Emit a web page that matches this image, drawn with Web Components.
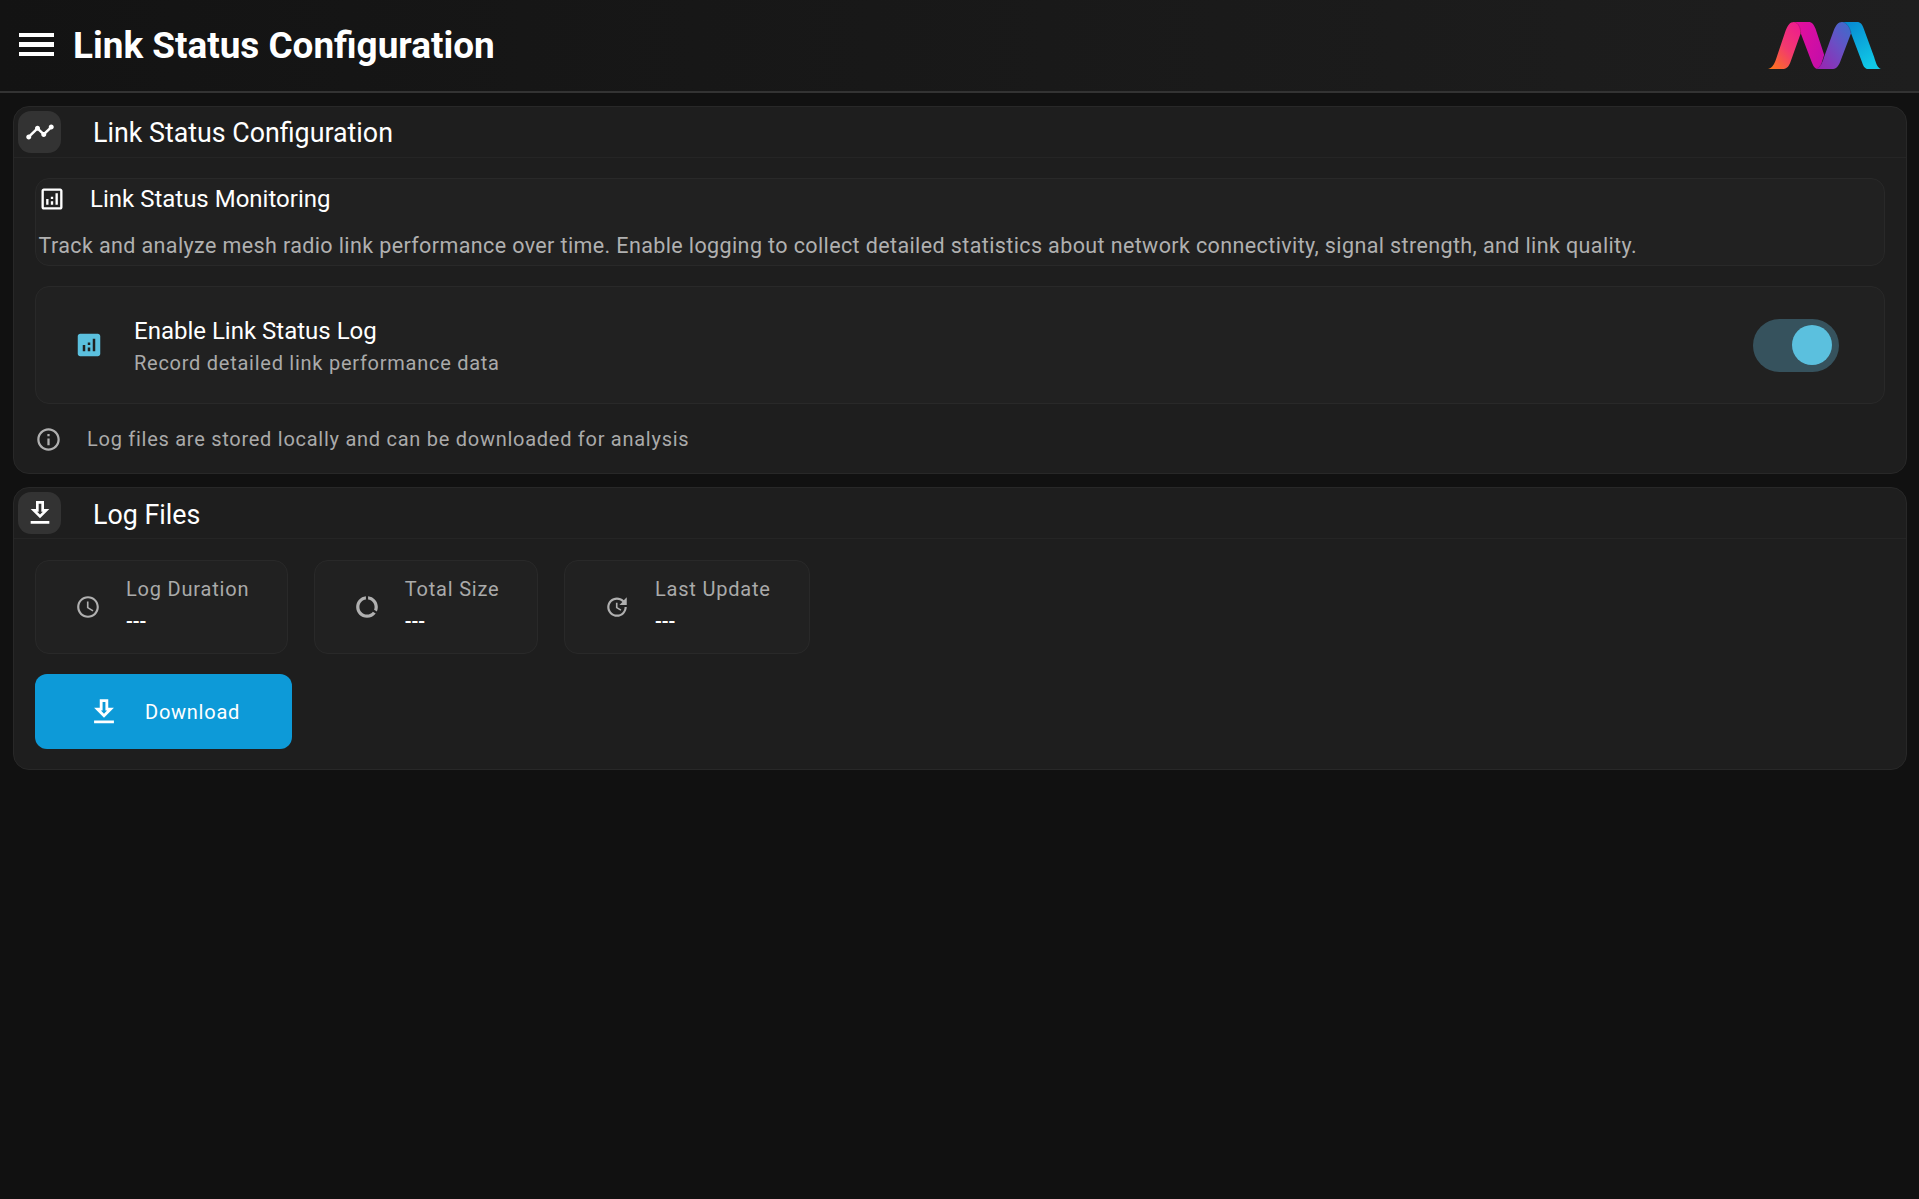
<!DOCTYPE html>
<html lang="en"><head><meta charset="utf-8"><title>Link Status Configuration</title>
<style>
html,body{margin:0;padding:0;background:#111;height:100%}
body{font-family:Roboto,"Liberation Sans",sans-serif;color:#fff}
</style></head><body>
<link-app></link-app>
<script>
const P={
 timeline:"M23 8c0 1.1-.9 2-2 2-.18 0-.35-.02-.51-.07l-3.56 3.55c.05.16.07.34.07.52 0 1.1-.9 2-2 2s-2-.9-2-2c0-.18.02-.36.07-.52l-2.55-2.55c-.16.05-.34.07-.52.07s-.36-.02-.52-.07l-4.55 4.56c.05.16.07.33.07.51 0 1.1-.9 2-2 2s-2-.9-2-2 .9-2 2-2c.18 0 .35.02.51.07l4.56-4.55C8.02 9.36 8 9.18 8 9c0-1.1.9-2 2-2s2 .9 2 2c0 .18-.02.36-.07.52l2.55 2.55c.16-.05.34-.07.52-.07s.36.02.52.07l3.55-3.56C19.02 8.35 19 8.18 19 8c0-1.1.9-2 2-2s2 .9 2 2z",
 assess:"M19 3H5c-1.1 0-2 .9-2 2v14c0 1.1.9 2 2 2h14c1.1 0 2-.9 2-2V5c0-1.1-.9-2-2-2zm0 16H5V5h14v14zM7 12h2v5H7zm8-5h2v10h-2zm-4 7h2v3h-2zm0-4h2v2h-2z",
 analytics:"M19 3H5c-1.1 0-2 .9-2 2v14c0 1.1.9 2 2 2h14c1.1 0 2-.9 2-2V5c0-1.1-.9-2-2-2zM9 17H7v-5h2v5zm4 0h-2v-3h2v3zm0-5h-2v-2h2v2zm4 5h-2V7h2v10z",
 info:"M11 7h2v2h-2zm0 4h2v6h-2zm1-9C6.48 2 2 6.48 2 12s4.48 10 10 10 10-4.48 10-10S17.52 2 12 2zm0 18c-4.41 0-8-3.59-8-8s3.59-8 8-8 8 3.59 8 8-3.59 8-8 8z",
 download:"M19 9h-4V3H9v6H5l7 7 7-7zm-8 2V5h2v6h1.17L12 13.17 9.83 11H11zm-6 7h14v2H5z",
 clock:"M11.99 2C6.47 2 2 6.48 2 12s4.47 10 9.99 10C17.52 22 22 17.52 22 12S17.52 2 11.99 2zM12 20c-4.42 0-8-3.58-8-8s3.58-8 8-8 8 3.58 8 8-3.58 8-8 8zm.5-13H11v6l5.25 3.15.75-1.23-4.5-2.67z",
 usage:"M13 2.05v3.03c3.39.49 6 3.39 6 6.92 0 .9-.18 1.75-.48 2.54l2.6 1.53c.56-1.24.88-2.62.88-4.07 0-5.18-3.95-9.45-9-9.95zM12 19c-3.87 0-7-3.13-7-7 0-3.53 2.61-6.43 6-6.92V2.05c-5.06.5-9 4.76-9 9.95 0 5.52 4.47 10 9.99 10 3.31 0 6.24-1.61 8.06-4.09l-2.6-1.53C16.17 17.98 14.21 19 12 19z",
 update:"M21 10.12h-6.78l2.74-2.82c-2.73-2.7-7.15-2.8-9.88-.1-2.73 2.71-2.73 7.08 0 9.79s7.15 2.71 9.88 0C18.32 15.65 19 14.08 19 12.1h2c0 1.98-.88 4.55-2.64 6.29-3.51 3.48-9.21 3.48-12.72 0-3.5-3.47-3.53-9.11-.02-12.58s9.14-3.47 12.65 0L21 3v7.12zM12.5 8v4.25l3.5 2.08-.72 1.21L11 13V8h1.5z"
};
function def(name,html){
 customElements.define(name,class extends HTMLElement{
  connectedCallback(){
   if(this.shadowRoot)return;
   const r=this.attachShadow({mode:"open"});
   r.innerHTML=typeof html==="function"?html(this):html;
  }
 });
}
def("mat-icon",el=>`<style>:host{display:inline-flex;flex:none;width:var(--s,28px);height:var(--s,28px);color:var(--c,currentColor)}svg{width:100%;height:100%;fill:currentColor;display:block}</style><svg viewBox="0 0 24 24" aria-hidden="true"><path d="${P[el.getAttribute("name")]}"/></svg>`);
def("app-logo",`<style>:host{display:block;width:113px;height:47px;margin:1px -1.5px 0 0}svg{display:block;width:100%;height:100%}</style>
<svg viewBox="27 22 328 138" preserveAspectRatio="none">
<defs>
<linearGradient id="a" x1="0" y1="1" x2=".75" y2="0"><stop offset="0" stop-color="#ff7a14"/><stop offset=".55" stop-color="#f23a6e"/><stop offset="1" stop-color="#ee1f8c"/></linearGradient>
<linearGradient id="b" x1="0" y1="0" x2="1" y2=".5"><stop offset="0" stop-color="#e80f9b"/><stop offset="1" stop-color="#c60ea8"/></linearGradient>
<linearGradient id="c" x1="0" y1="1" x2="1" y2="0"><stop offset="0" stop-color="#a01fae"/><stop offset=".55" stop-color="#6a4fc4"/><stop offset="1" stop-color="#3870cc"/></linearGradient>
<linearGradient id="d" x1="0" y1="0" x2=".6" y2="1"><stop offset="0" stop-color="#0684cf"/><stop offset="1" stop-color="#10c8e6"/></linearGradient>
</defs>
<path fill="url(#b)" d="M100 22H145C155 22 160 30 165 42L190 118L178 160H172C163 160 158 150 154 140L122 55C116 38 110 26 100 22Z"/>
<path fill="url(#a)" d="M27 160C40 156 45 146 50 132L78 48C84 32 90 22 103 22C115 24 122 40 122 55L92 140C86 155 80 160 68 160Z"/>
<path fill="url(#d)" d="M238 22H285C296 22 301 30 305 42L335 125C341 145 345 157 355 160H318C308 160 303 150 300 140L268 55C262 38 250 26 238 22Z"/>
<path fill="url(#c)" d="M165 160C177 158 182 146 188 130L218 46C224 32 230 22 243 22C256 24 266 40 268 55L236 140C230 154 224 160 212 160Z"/>
<path fill="none" stroke="#000" stroke-opacity=".22" stroke-width="2" d="M103 22C115 24 122 40 122 55M243 22C256 24 266 40 268 55M165 160C177 158 182 146 188 130"/>
</svg>`);
def("app-header",`<style>:host{display:flex;align-items:center;box-sizing:border-box;height:93px;padding:0 40px 2px 19px;background:linear-gradient(90deg,#131313,#1e1e1e);border-bottom:2px solid #333}
.menu{display:flex;flex-direction:column;justify-content:space-between;width:35px;height:24px;margin-right:19px}
.menu i{display:block;height:4.4px;background:#fff}
h1{margin:3px 0 0;flex:1;font:700 36.9px/1.2 Roboto,sans-serif;color:#fff}</style>
<div class="menu"><i></i><i></i><i></i></div><h1><slot></slot></h1><slot name="logo"></slot>`);
def("section-card",`<style>:host{display:block;background:#1e1e1e;border:1px solid #282828;border-radius:16px}
.head{display:flex;align-items:center;height:51px;box-sizing:border-box;padding-left:4px;border-bottom:1px solid #252525}
.box{width:43px;height:42px;border-radius:13px;background:#333;display:flex;align-items:center;justify-content:center;margin-right:32px;--s:32px}
.t{font:400 26.8px/1.2 Roboto,sans-serif;color:#fff;margin-top:var(--tm,2px)}
.body{padding:var(--bp,20px 21px);display:flex;flex-direction:column}</style>
<div class="head"><div class="box"><slot name="icon"></slot></div><div class="t"><slot name="title"></slot></div></div><div class="body"><slot></slot></div>`);
def("monitor-panel",`<style>:host{display:block;background:#212121;border:1px solid #292929;border-radius:14px;box-sizing:border-box;height:88px;padding:0 3px 0 2px;margin-bottom:20px}
.h{display:flex;align-items:center;height:40px;--s:28px}
.t{font:400 24px/1.2 Roboto,sans-serif;color:#fff;margin-left:24px}
p{margin:14px 0 0 .5px;font:400 21.5px/1.2 Roboto,sans-serif;letter-spacing:.385px;color:#b0b0b0;white-space:nowrap}</style>
<div class="h"><slot name="icon"></slot><div class="t"><slot name="title"></slot></div></div><p><slot></slot></p>`);
def("toggle-row",`<style>:host{display:flex;align-items:center;background:#212121;border:1px solid #292929;border-radius:14px;box-sizing:border-box;height:118px;padding:0 45px 0 38px;--s:30px}
.x{flex:1;margin-left:30px;padding-top:2px}
.t{font:400 24px/1.2 Roboto,sans-serif;color:#fff}
.s{margin-top:6px;font:400 20px/1.2 Roboto,sans-serif;letter-spacing:.74px;color:#aaa}
.track{width:86px;height:53px;border-radius:27px;background:#36525d;position:relative;flex:none}
.knob{position:absolute;top:6.5px;right:6.6px;width:40px;height:40px;border-radius:50%;background:#5bc0de}</style>
<slot name="icon"></slot><div class="x"><div class="t"><slot name="title"></slot></div><div class="s"><slot name="sub"></slot></div></div><div class="track"><div class="knob"></div></div>`);
def("info-note",`<style>:host{display:flex;align-items:center;height:26px;margin-top:22px;margin-bottom:1px;--s:27px;--c:#b0b0b0}
span{margin-left:25px;font:400 20px/1.2 Roboto,sans-serif;letter-spacing:.73px;color:#aaa;white-space:nowrap}</style><slot name="icon"></slot><span><slot></slot></span>`);
def("stat-tile",`<style>:host{display:flex;align-items:center;box-sizing:border-box;height:94px;background:#212121;border:1px solid #292929;border-radius:14px;padding:0 38px 0 39px;--s:26px;--c:#b0b0b0}
.x{margin-left:25px;padding-bottom:4px}
.l{font:400 20px/1.2 Roboto,sans-serif;letter-spacing:.8px;color:#aaa}
.v{margin-top:8px;font:500 20px/1.2 Roboto,sans-serif;color:#fff}</style>
<slot name="icon"></slot><div class="x"><div class="l"><slot name="label"></slot></div><div class="v"><slot name="value"></slot></div></div>`);
def("dl-button",`<style>:host{display:inline-flex;align-items:center;box-sizing:border-box;width:257px;height:75px;background:#0d9ad8;border-radius:12px;padding-left:52px;--s:34px;color:#fff;margin-top:20px;align-self:flex-start}
span{margin-left:24px;font:400 20px/1.2 Roboto,sans-serif;letter-spacing:.75px}</style><slot name="icon"></slot><span><slot></slot></span>`);
def("stat-row",`<style>:host{display:flex;gap:25.5px}</style><slot></slot>`);
def("link-app",`<style>:host{display:block}
main{padding:13px 12px 0 13px;display:flex;flex-direction:column;gap:13px}
.c2{--bp:21px 21px 20px;--tm:4px}</style>
<app-header>Link Status Configuration<app-logo slot="logo"></app-logo></app-header>
<main>
<section-card>
 <mat-icon slot="icon" name="timeline" style="--s:30px"></mat-icon><span slot="title">Link Status Configuration</span>
 <monitor-panel><mat-icon slot="icon" name="assess"></mat-icon><span slot="title">Link Status Monitoring</span>Track and analyze mesh radio link performance over time. Enable logging to collect detailed statistics about network connectivity, signal strength, and link quality.</monitor-panel>
 <toggle-row><mat-icon slot="icon" name="analytics" style="--c:#5bc0de"></mat-icon><span slot="title">Enable Link Status Log</span><span slot="sub">Record detailed link performance data</span></toggle-row>
 <info-note><mat-icon slot="icon" name="info"></mat-icon>Log files are stored locally and can be downloaded for analysis</info-note>
</section-card>
<section-card class="c2">
 <mat-icon slot="icon" name="download"></mat-icon><span slot="title">Log Files</span>
 <stat-row>
  <stat-tile><mat-icon slot="icon" name="clock"></mat-icon><span slot="label">Log Duration</span><span slot="value">---</span></stat-tile>
  <stat-tile><mat-icon slot="icon" name="usage"></mat-icon><span slot="label">Total Size</span><span slot="value">---</span></stat-tile>
  <stat-tile><mat-icon slot="icon" name="update"></mat-icon><span slot="label">Last Update</span><span slot="value">---</span></stat-tile>
 </stat-row>
 <dl-button><mat-icon slot="icon" name="download"></mat-icon>Download</dl-button>
</section-card>
</main>`);
</script>
</body></html>
